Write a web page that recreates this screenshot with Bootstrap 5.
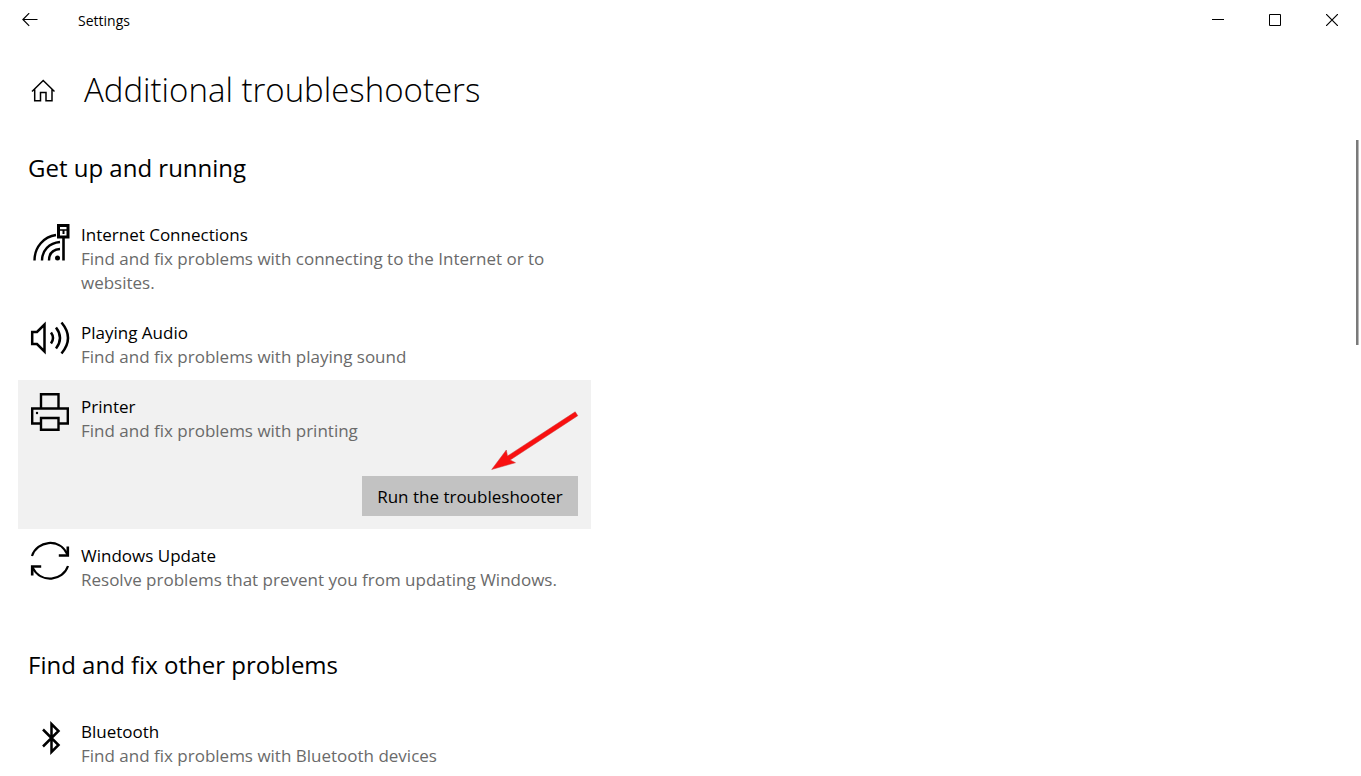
<!DOCTYPE html>
<html lang="en">
<head>
<meta charset="utf-8">
<meta name="viewport" content="width=device-width, initial-scale=1">
<title>Settings</title>
<link href="https://cdn.jsdelivr.net/npm/bootstrap@5.3.0/dist/css/bootstrap.min.css" rel="stylesheet">
<style>
  body { font-family: "Open Sans", "Noto Sans", sans-serif; font-size: 17px; font-weight: 400; line-height: 24px; color: #000; background: #fff; }
  svg { display: block; fill: none; stroke: #000; }
  .title-bar { height: 40px; }
  .title-bar .caption { font-size: 14px; padding: 2px 0 0 18px; }
  .bar-btn { width: 57px; height: 40px; color: #000; }
  .back-btn { width: 60px; }
  .window-btns { margin-right: 1px; }
  .page-head { height: 100px; padding-left: 31px; gap: 29px; }
  .page-title { font-size: 33px; font-weight: 300; line-height: 48px; }
  .pane { width: 591px; max-width: 100%; padding: 12px 0 0 18px; }
  .group-title { font-size: 24px; line-height: 32px; padding-left: 10px; font-weight: 400; }
  .next-group { margin-top: 46px; }
  .fixer { padding: 15px 13px 11px 12px; gap: 11px; }
  .fixer.active { background: #f1f1f1; padding-bottom: 13px; }
  .glyph { width: 40px; margin-top: -3px; }
  .fixer h3 { font-size: 17px; line-height: 24px; font-weight: 400; }
  .fixer p { color: #6a6a6a; }
  .run-btn { width: 216px; height: 40px; background: #c2c2c2; color: #000; font-size: 17px; line-height: 24px; margin-top: 33px; padding: 2px 0 0; }
  .pointer { top: 31px; right: 12px; }
  .scroll-thumb { width: 3px; height: 205px; margin-right: 2px; background: #7a7a7a; border-right: 1px solid #b8b8b8; }
</style>
<script src="https://cdn.jsdelivr.net/npm/bootstrap@5.3.0/dist/js/bootstrap.bundle.min.js"></script>
</head>
<body>
<div class="vh-100 overflow-hidden d-flex flex-column">
  <header class="title-bar d-flex align-items-center flex-shrink-0">
    <button type="button" class="btn bar-btn back-btn rounded-0 border-0 p-0 d-flex align-items-center justify-content-center" aria-label="Back">
      <svg width="16" height="14" viewBox="0 0 16 14" stroke-width="1.2"><path d="M15.500 6.500H1M7.200 .2L.9 6.500l6.300 6.300"/></svg>
    </button>
    <span class="caption">Settings</span>
    <div class="window-btns d-flex ms-auto">
      <button type="button" class="btn bar-btn rounded-0 border-0 p-0 d-flex align-items-center justify-content-center" aria-label="Minimize">
        <svg width="12" height="12" viewBox="0 0 12 12"><path d="M0 5.500h12"/></svg>
      </button>
      <button type="button" class="btn bar-btn rounded-0 border-0 p-0 d-flex align-items-center justify-content-center" aria-label="Maximize">
        <svg width="12" height="12" viewBox="0 0 12 12"><path d="M.5 .5h11v11H.5z"/></svg>
      </button>
      <button type="button" class="btn bar-btn rounded-0 border-0 p-0 d-flex align-items-center justify-content-center" aria-label="Close">
        <svg width="12" height="12" viewBox="0 0 12 12" stroke-width="1.200"><path d="M0 0l12 12M12 0L0 12"/></svg>
      </button>
    </div>
  </header>

  <div class="page-head d-flex align-items-center flex-shrink-0">
    <a href="#" aria-label="Home"><svg width="24" height="24" viewBox="0 0 24 24" stroke-width="1.500"><path d="M1 13.500L12.200 2.500 23.500 13.500M3.700 11.500v11.200h5.800v-8.200h5.500v8.200h6V11.500"/></svg></a>
    <h1 class="page-title mb-0">Additional troubleshooters</h1>
  </div>

  <div class="d-flex flex-grow-1 overflow-hidden">
    <main class="flex-grow-1">
      <div class="pane">
        <section>
          <h2 class="group-title mb-4">Get up and running</h2>
          <article class="fixer d-flex">
            <div class="glyph flex-shrink-0">
              <svg width="40" height="42" viewBox="0 -4 40 42" stroke-width="2.400">
                <path d="M4.500 36.500C4.500 23 14 12.500 26 11M12 36.500c0-10 7-17.500 18-18.500M19 36.500c0-7 4-11 11-11.500"/>
                <path d="M33.500 14v22.500" stroke-width="2.600"/><path d="M28.500 1.500h9.500v11.500h-9.500z" stroke-width="3"/><path d="M29 6h9" stroke-width="1.500"/><path d="M33.500 6v4" stroke-width="2"/>
                <circle cx="27.500" cy="34" r="2.500" fill="#000" stroke="none"/>
              </svg>
            </div>
            <div class="flex-grow-1"><h3 class="mb-0">Internet Connections</h3><p class="mb-0">Find and fix problems with connecting to the Internet or to websites.</p></div>
          </article>
          <article class="fixer d-flex">
            <div class="glyph flex-shrink-0">
              <svg width="40" height="38" viewBox="0 -3 40 38" stroke-width="2.500">
                <path d="M2.200 11h4.800l7.500-7.500v27L7 23H2.200z"/><path d="M21 11.500q4 5.500 0 11M26 6.500q8 10.500 0 21M31.500 1.500q13 15.500 0 31"/>
              </svg>
            </div>
            <div class="flex-grow-1"><h3 class="mb-0">Playing Audio</h3><p class="mb-0">Find and fix problems with playing sound</p></div>
          </article>
          <article class="fixer active d-flex position-relative">
            <div class="glyph flex-shrink-0">
              <svg width="40" height="40" viewBox="0 -1 40 40" stroke-width="2.400">
                <path d="M11 15.500V1.300h17.500v14.200M10.500 30.500H2.200v-15h35.600v15h-8.500M11 25h17.500v11.700H11z"/><circle cx="7" cy="20" r="1.200" fill="#000" stroke="none"/>
              </svg>
            </div>
            <div class="flex-grow-1 d-flex flex-column">
              <h3 class="mb-0">Printer</h3><p class="mb-0">Find and fix problems with printing</p>
              <button type="button" class="btn run-btn rounded-0 border-0 align-self-end">Run the troubleshooter</button>
            </div>
            <svg class="pointer position-absolute" width="88" height="60" viewBox="0 0 88 60" aria-hidden="true"><path d="M84.200 .8l2.600 3.900L19.200 49l5.300 2.700L.7 58.500 15.300 39l1.200 6z" fill="#f91010" stroke="#c83a3a" stroke-width=".5"/></svg>
          </article>
          <article class="fixer d-flex">
            <div class="glyph flex-shrink-0">
              <svg width="40" height="40" viewBox="0 -1 40 40" stroke-width="2.200">
                <path d="M2 14C7-1 29-5 37.500 12.500M38 24C33 39 11 42 2.500 25.500"/><path d="M37.800 4.500v9h-9M2.200 33.500v-9h9" stroke-width="2.600"/>
              </svg>
            </div>
            <div class="flex-grow-1"><h3 class="mb-0">Windows Update</h3><p class="mb-0">Resolve problems that prevent you from updating Windows.</p></div>
          </article>
        </section>
        <section class="next-group">
          <h2 class="group-title mb-4">Find and fix other problems</h2>
          <article class="fixer d-flex">
            <div class="glyph flex-shrink-0">
              <svg width="40" height="40" viewBox="0 -4 40 40" stroke-width="2.500"><path d="M13 8.500L28.500 24 21.500 31V3l7 7L13 25.500"/></svg>
            </div>
            <div class="flex-grow-1"><h3 class="mb-0">Bluetooth</h3><p class="mb-0">Find and fix problems with Bluetooth devices</p></div>
          </article>
        </section>
      </div>
    </main>
    <div class="scroll-thumb flex-shrink-0"></div>
  </div>
</div>
</body>
</html>
